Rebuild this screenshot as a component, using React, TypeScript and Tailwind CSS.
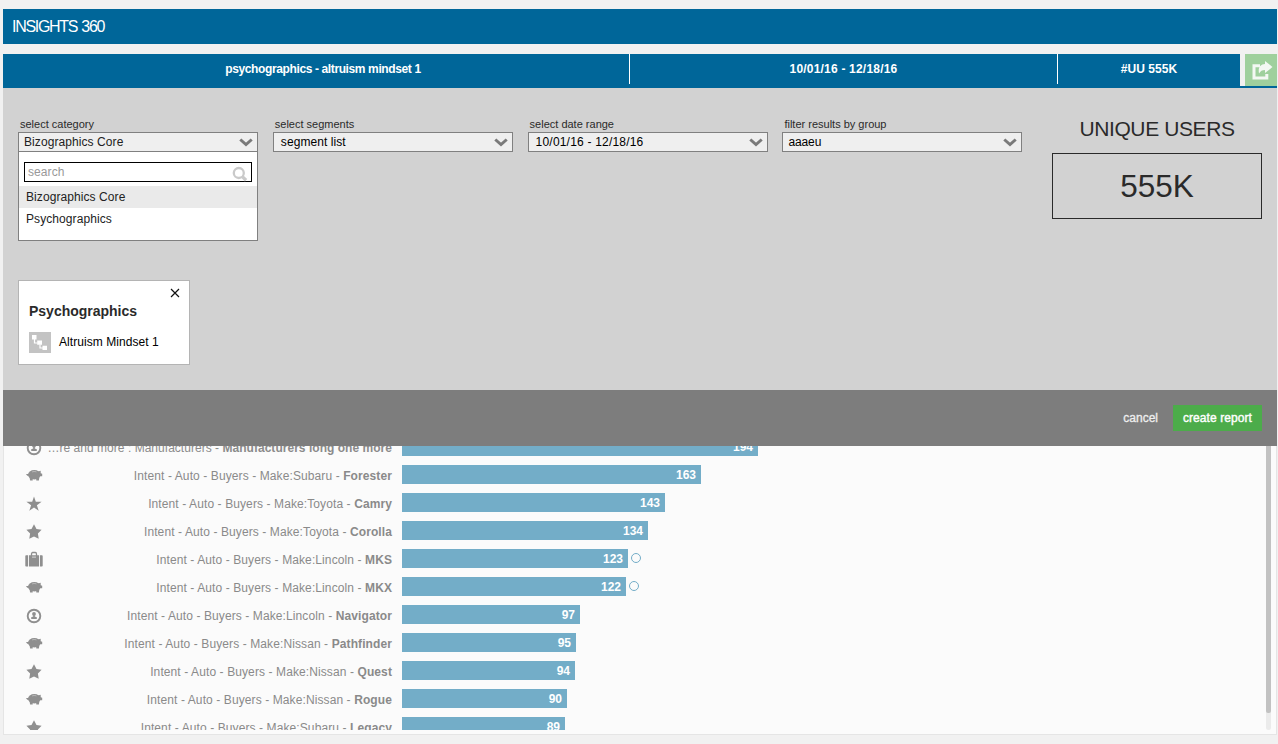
import React from "react";

type IconKind = "user" | "pig" | "star" | "sharpStar" | "case";

type Row = {
  icon: IconKind;
  prefix: string;
  name: string;
  value: number;
  width: number;
  marker?: boolean;
  tight?: boolean;
};

const rows: Row[] = [
  { icon: "user", prefix: "…re and more : Manufacturers - ", name: "Manufacturers long one more", value: 194, width: 356, tight: true },
  { icon: "pig", prefix: "Intent - Auto - Buyers - Make:Subaru - ", name: "Forester", value: 163, width: 299 },
  { icon: "sharpStar", prefix: "Intent - Auto - Buyers - Make:Toyota - ", name: "Camry", value: 143, width: 263 },
  { icon: "star", prefix: "Intent - Auto - Buyers - Make:Toyota - ", name: "Corolla", value: 134, width: 246 },
  { icon: "case", prefix: "Intent - Auto - Buyers - Make:Lincoln - ", name: "MKS", value: 123, width: 226, marker: true },
  { icon: "pig", prefix: "Intent - Auto - Buyers - Make:Lincoln - ", name: "MKX", value: 122, width: 224, marker: true },
  { icon: "user", prefix: "Intent - Auto - Buyers - Make:Lincoln - ", name: "Navigator", value: 97, width: 178 },
  { icon: "pig", prefix: "Intent - Auto - Buyers - Make:Nissan - ", name: "Pathfinder", value: 95, width: 174 },
  { icon: "star", prefix: "Intent - Auto - Buyers - Make:Nissan - ", name: "Quest", value: 94, width: 173 },
  { icon: "pig", prefix: "Intent - Auto - Buyers - Make:Nissan - ", name: "Rogue", value: 90, width: 165 },
  { icon: "star", prefix: "Intent - Auto - Buyers - Make:Subaru - ", name: "Legacy", value: 89, width: 163 },
];

function RowIcon({ kind }: { kind: IconKind }) {
  return (
    <svg width="18" height="18" viewBox="0 0 18 18" className="block fill-[#8f8f8f]">
      {kind === "user" && (
        <>
          <circle cx="9" cy="9" r="6.3" fill="none" stroke="#8f8f8f" strokeWidth="1.9" />
          <circle cx="9" cy="6.900" r="1.900" />
          <path d="M8.200 8h1.600v1.500l2 .7v1.900H6.200v-1.900l2-.7z" />
        </>
      )}
      {kind === "pig" && (
        <>
          <ellipse cx="9.300" cy="7.700" rx="6.300" ry="4.700" />
          <path d="M1 6.900h3v1.900H2.200zM13 4.500l2.700-.8v2.600l1.500.5v2.500h-2.500zM4.500 10h3.200v3.500H5.100zM11 10h3.400l-.5 3.500h-2.600z" />
          <path d="M7.200 4.900c1.400-.5 2.800-.5 4.200 0" fill="none" stroke="#c8c8c8" strokeWidth=".8" />
        </>
      )}
      {kind === "star" && (
        <path d="M9 1.300l2.500 4.600 5.100.9-3.700 3.700.8 5.300L9 13.600l-4.700 2.200.8-5.300L1.400 6.800l5.100-.9z" />
      )}
      {kind === "sharpStar" && (
        <path d="M9 1.400l1.800 5.400h5.800l-4.700 3.500 1.800 5.500L9 12.500l-4.700 3.300 1.800-5.500L1.400 6.800h5.800z" />
      )}
      {kind === "case" && (
        <>
          <path d="M.3 5c0-.6.300-.8.800-.8h2v11.400h-2c-.5 0-.8-.3-.8-.8zM14.900 4.200h2c.5 0 .8.300.8.800v9.800c0 .5-.3.800-.8.800h-2zM4 4.200h10v11.400H4z" />
          <path d="M6.500 5V3.200c0-.8.400-1.700 1.200-1.700h2.600c.8 0 1.200.9 1.200 1.700V5" fill="none" stroke="#8f8f8f" strokeWidth="1.300" />
          <path d="M7 5.600h4v1H7z" fill="#d5d5d5" />
        </>
      )}
    </svg>
  );
}

function Chevron() {
  return (
    <svg width="14" height="9" viewBox="0 0 14 9" className="block shrink-0">
      <path d="M1.300 1.500L7 6.600l5.700-5.100" fill="none" stroke="#7a7a7a" strokeWidth="3" />
    </svg>
  );
}

function SelectField({
  label,
  value,
  style,
  children,
}: {
  label: string;
  value: string;
  style: string;
  children?: React.ReactNode;
}) {
  return (
    <div className="relative w-60">
      <div className="h-[15px] pl-[2px] text-[11px] leading-[15px] text-[#2a2a2a]">{label}</div>
      <div className={`flex h-5 items-center justify-between border border-[#808080] bg-[#efefef] pr-1 text-[12px] leading-[18px] ${style}`}>
        <span>{value}</span>
        <Chevron />
      </div>
      {children}
    </div>
  );
}

function CategoryMenu() {
  return (
    <div className="absolute top-[34px] left-0 h-[90px] w-60 border border-[#808080] bg-white pt-[10px] text-[12px] tracking-[0.080px] text-[#222]">
      <div className="mx-[5px] flex h-5 items-center justify-between border border-black pr-[3px] pl-[3px] text-[#999]">
        <span className="leading-[18px]">search</span>
        <svg width="16" height="16" viewBox="0 0 16 16" className="mt-[3px] block">
          <circle cx="6.800" cy="7" r="5" fill="none" stroke="#cacaca" strokeWidth="2.300" />
          <path d="M10.300 10.600l3.800 3.600" stroke="#cacaca" strokeWidth="3.300" />
        </svg>
      </div>
      <div className="mt-1 h-[22px] bg-[#eaeaea] pl-[7px] leading-[22px]">Bizographics Core</div>
      <div className="h-[22px] pl-[7px] leading-[22px]">Psychographics</div>
    </div>
  );
}

function SegmentCard() {
  return (
    <div className="mt-[128px] h-[85px] w-[172px] border border-[#b4b4b4] bg-white pl-[10px]">
      <div className="flex h-[21px] items-end justify-end pr-[9px]">
        <svg width="10" height="10" viewBox="0 0 10 10" className="mb-1 block">
          <path d="M1 1l8 8M9 1l-8 8" stroke="#111" strokeWidth="1.200" />
        </svg>
      </div>
      <div className="h-[18px] text-[14px] leading-[18px] font-bold tracking-[-0.010px] text-[#2a2a2a]">Psychographics</div>
      <div className="mt-3 flex h-[21px] gap-2">
        <svg width="22" height="21" viewBox="0 0 22 21" className="block">
          <path d="M0 0h22v21H0z" fill="#c3c3c3" />
          <path d="M3 3h4.500v4.500H3zM8.200 8.500H13v4.300H8.200zM13.500 13.700H18V18h-4.500z" fill="#fff" />
          <path d="M5.500 7v4h3M11 12.500V16h3" fill="none" stroke="#fff" strokeWidth="1.200" />
        </svg>
        <span className="text-[12px] leading-[20px] tracking-[0.060px] text-black">Altruism Mindset 1</span>
      </div>
    </div>
  );
}

function BarRow({ row }: { row: Row }) {
  return (
    <div className="flex h-7 shrink-0 pt-1">
      <div className="mt-[2px] ml-[21px] w-[18px]">
        <RowIcon kind={row.icon} />
      </div>
      <div
        className={`mr-[10px] w-[349px] text-right text-[12px] leading-[23px] whitespace-pre text-[#8a8a8a] ${
          row.tight ? "tracking-[0.030px]" : "tracking-[0.100px]"
        }`}
      >
        {row.prefix}
        <b>{row.name}</b>
      </div>
      <div
        className="h-[19px] bg-[#73adc8] pr-[5px] text-right text-[12px] leading-[21px] font-bold text-white"
        style={{ width: row.width }}
      >
        {row.value}
      </div>
      {row.marker && <div className="mt-1 ml-[3px] h-[10px] w-[10px] rounded-full border border-[#73adc8]" />}
    </div>
  );
}

export default function App() {
  return (
    <div className="flex h-[744px] w-[1278px] flex-col overflow-hidden bg-[#f1f1f1] pt-[9px] pr-px pl-[3px] font-['Liberation_Sans',Arial,sans-serif]">
      <header className="h-[35px] shrink-0 bg-[#006699] pl-[9px] text-[16px] leading-[35px] tracking-[-1.300px] [word-spacing:1px] text-white">
        INSIGHTS 360
      </header>

      <div className="mt-[10px] flex h-[34px] shrink-0 border-b-2 border-[#006699] text-center text-[12px] leading-[30px] font-bold text-white">
        <div className="w-[1237px] bg-[#006699]">
          <div className="flex h-[30px]">
            <div className="w-[627px] border-r border-white tracking-[-0.380px]">
              <span className="ml-[14px]">psychographics - altruism mindset 1</span>
            </div>
            <div className="w-[428px] border-r border-white tracking-[0.200px]">10/01/16 - 12/18/16</div>
            <div className="w-[182px] tracking-[0.050px]">#UU 555K</div>
          </div>
        </div>
        <div className="w-[5px]" />
        <button className="flex h-8 w-8 items-center justify-center bg-[#9fd09d]">
          <svg width="21" height="19" viewBox="0 0 21 19" className="ml-[3px] block">
            <path d="M8 4.700H2V17h12.800v-4" fill="none" stroke="#f4f8f4" strokeWidth="3" />
            <path d="M13 0l7.500 6L13 12V9C10 9 8.600 10 7 12.500 5.900 6.500 8.200 3.300 13 3z" fill="#f4f8f4" />
          </svg>
        </button>
      </div>

      <section className="flex h-[302px] shrink-0 bg-[#d2d2d2] pt-[29px] pl-[15px]">
        <div className="w-[1034px]">
          <div className="flex gap-[14.800px]">
            <SelectField label="select category" value="Bizographics Core" style="pl-[5px] text-[#222] tracking-[0.080px]">
              <CategoryMenu />
            </SelectField>
            <SelectField label="select segments" value="segment list" style="pl-[7px] text-black tracking-[0.080px]" />
            <SelectField label="select date range" value="10/01/16 - 12/18/16" style="pl-[7px] text-black tracking-[0.200px]" />
            <SelectField label="filter results by group" value="aaaeu" style="pl-[5px] text-black tracking-[-0.100px]" />
          </div>
          <SegmentCard />
        </div>
        <div className="w-[210px] text-center text-[#2a2a2a]">
          <div className="h-9 text-[21px] leading-[24px] tracking-[-0.400px]">UNIQUE USERS</div>
          <div className="h-[66px] border border-[#2a2a2a] text-[31.500px] leading-[65px]">555K</div>
        </div>
      </section>

      <div className="flex h-14 shrink-0 items-center justify-end bg-[#7d7d7d] pr-[15px] text-[12px]">
        <button className="mr-[15px] text-[#eee] [-webkit-text-stroke:0.3px_#eee]">cancel</button>
        <button className="h-[26px] w-[89px] bg-[#4cac4a] tracking-[0.080px] text-white [-webkit-text-stroke:0.4px_white]">create report</button>
      </div>

      <main className="flex h-[289px] shrink-0 justify-between border border-t-0 border-[#e5e5e5] bg-[#fbfbfb] pr-[5px]">
        <div className="flex h-[284px] flex-col overflow-hidden">
          <div className="-mt-[13px] flex flex-col">
            {rows.map((row) => (
              <BarRow key={row.name} row={row} />
            ))}
          </div>
        </div>
        <div className="h-[284px] w-[5px] rounded-b-[3px] bg-[#ebebeb]">
          <div className="h-[267px] rounded-b-[2px] bg-[#c2c2c2]" />
        </div>
      </main>
    </div>
  );
}
